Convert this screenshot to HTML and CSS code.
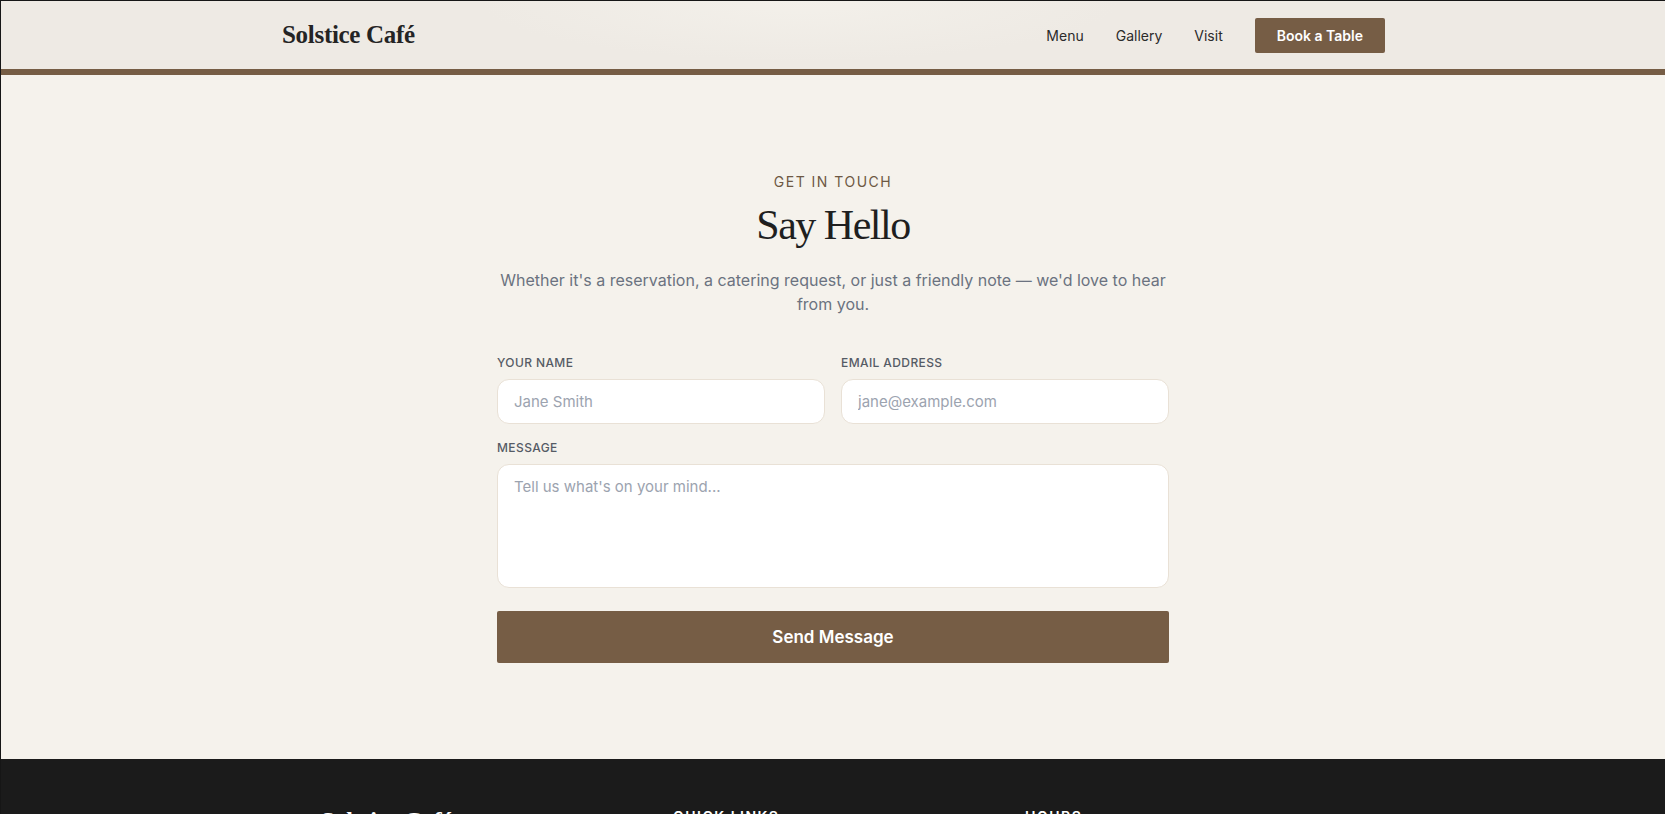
FILE: index.html
```html
<!DOCTYPE html>
<html lang="en">

<head>
    <meta charset="UTF-8">
    <meta name="viewport" content="width=device-width, initial-scale=1.0">
    <title>Contact | Solstice Café</title>
    <link rel="stylesheet" href="styles.css">
</head>

<body>
    <header class="site-header">
        <div class="container header-inner">
            <a href="#" class="logo">Solstice Café</a>
            <nav class="main-nav">
                <a href="#">Menu</a>
                <a href="#">Gallery</a>
                <a href="#">Visit</a>
                <a href="#" class="btn-book">Book a Table</a>
            </nav>
        </div>
    </header>

    <main class="contact">
        <p class="eyebrow">Get in Touch</p>
        <h1 class="contact-title">Say Hello</h1>
        <p class="contact-intro">Whether it's a reservation, a catering request, or just a friendly note — we'd love to hear from you.</p>

        <form class="contact-form" id="contactForm">
            <div class="form-row">
                <div class="field">
                    <label for="name">Your Name</label>
                    <input type="text" id="name" placeholder="Jane Smith">
                </div>
                <div class="field">
                    <label for="email">Email Address</label>
                    <input type="email" id="email" placeholder="jane@example.com">
                </div>
            </div>
            <div class="field">
                <label for="message">Message</label>
                <textarea id="message" placeholder="Tell us what's on your mind..."></textarea>
            </div>
            <button type="submit" class="btn-send">Send Message</button>
        </form>
    </main>

    <footer class="site-footer">
        <div class="footer-inner">
            <div class="footer-col">
                <div class="footer-logo">Solstice Café</div>
                <p>Small-batch coffee, seasonal plates and a warm seat by the window.</p>
            </div>
            <div class="footer-col">
                <h4>Quick Links</h4>
                <a href="#">Menu</a>
                <a href="#">Gallery</a>
                <a href="#">Visit</a>
            </div>
            <div class="footer-col">
                <h4>Hours</h4>
                <p>Mon – Fri: 7am – 6pm</p>
                <p>Sat – Sun: 8am – 4pm</p>
            </div>
        </div>
    </footer>
</body>

</html>
```

FILE: styles.css
```css
* {
    box-sizing: border-box;
}

body {
    margin: 0;
    font-family: Inter, "Noto Sans", Arial, sans-serif;
    background-color: #f5f2ec;
    color: #222;
    border-top: 1px solid #161616;
    border-left: 1px solid #161616;
}

a {
    text-decoration: none;
    color: inherit;
}

.container {
    max-width: 1104px;
    margin: 0 auto;
}

/* header */
.site-header {
    background: radial-gradient(ellipse 320px 60px at 48% 0%, #f3f0ea 0%, #eeeae4 100%);
    border-bottom: 6px solid #765d45;
}

.header-inner {
    height: 68px;
    display: flex;
    align-items: center;
    justify-content: space-between;
}

.logo {
    font-family: "Liberation Serif", "Times New Roman", serif;
    font-weight: 700;
    font-size: 25px;
    letter-spacing: -0.3px;
    color: #242424;
    margin-left: 1px;
}

.main-nav {
    display: flex;
    align-items: center;
    gap: 32px;
    font-size: 14px;
    color: #2b2b2b;
}

.btn-book {
    background-color: #765d45;
    color: #fff;
    font-weight: 600;
    padding: 8px 22px;
    border-radius: 2px;
    line-height: 19px;
}

/* contact */
.contact {
    padding: 97px 20px 96px;
    text-align: center;
}

.eyebrow {
    margin: 0;
    font-size: 14px;
    line-height: 20px;
    letter-spacing: 1.5px;
    text-transform: uppercase;
    color: #6d5843;
}

.contact-title {
    margin: 8px 0 0;
    font-family: "Liberation Serif", "Times New Roman", serif;
    font-weight: 400;
    font-size: 42px;
    line-height: 50px;
    letter-spacing: -1.5px;
    color: #1f1f1f;
}

.contact-intro {
    max-width: 690px;
    margin: 18px auto 0;
    font-size: 16px;
    line-height: 24px;
    color: #6b7280;
}

.contact-form {
    max-width: 672px;
    margin: 39px auto 0;
    text-align: left;
    display: flex;
    flex-direction: column;
    gap: 16px;
}

.form-row {
    display: grid;
    grid-template-columns: 1fr 1fr;
    gap: 16px;
}

.field {
    display: flex;
    flex-direction: column;
    gap: 8px;
}

.field label {
    font-size: 12px;
    line-height: 16px;
    font-weight: 500;
    letter-spacing: 0.4px;
    text-transform: uppercase;
    color: #555b65;
}

.field input,
.field textarea {
    font-family: inherit;
    font-size: 15px;
    line-height: 19px;
    padding: 12px 16px;
    border: 1px solid #e9e1d6;
    border-radius: 12px;
    background-color: #fff;
    color: #222;
    outline: none;
}

.field textarea {
    height: 124px;
    padding-top: 12px;
    resize: none;
}

.field input::placeholder,
.field textarea::placeholder {
    color: #9ca3af;
}

.btn-send {
    margin-top: 7px;
    font-family: inherit;
    font-size: 17px;
    font-weight: 600;
    line-height: 24px;
    padding: 14px;
    border: none;
    border-radius: 2px;
    background-color: #765d45;
    color: #fff;
    cursor: pointer;
}

/* footer */
.site-footer {
    background-color: #1b1b1b;
    color: #d8d4ce;
    padding: 47px 20px 60px;
}

.footer-inner {
    max-width: 1024px;
    margin: 0 auto;
    display: grid;
    grid-template-columns: repeat(3, 1fr);
    gap: 32px;
}

.footer-logo {
    font-family: "Liberation Serif", "Times New Roman", serif;
    font-weight: 700;
    font-size: 24px;
    line-height: 28px;
    color: #fff;
}

.footer-col h4 {
    margin: 1px 0 12px;
    font-size: 14px;
    line-height: 20px;
    font-weight: 600;
    letter-spacing: 1.5px;
    text-transform: uppercase;
    color: #fff;
}

.footer-col p,
.footer-col a {
    display: block;
    margin: 6px 0;
    font-size: 14px;
    color: #a8a29a;
}
```
